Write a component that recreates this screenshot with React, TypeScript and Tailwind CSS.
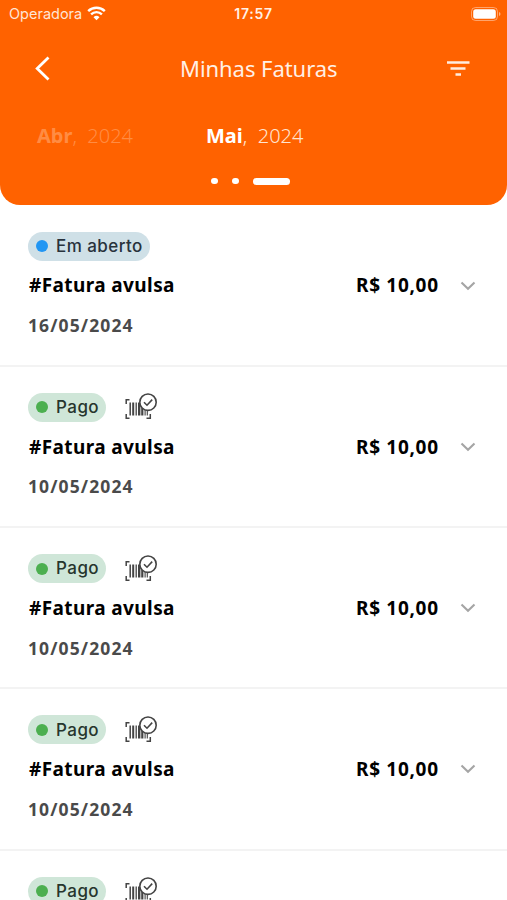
type Invoice = { status: 'open' | 'paid'; date?: string };

const invoices: Invoice[] = [
  { status: 'open', date: '16/05/2024' },
  { status: 'paid', date: '10/05/2024' },
  { status: 'paid', date: '10/05/2024' },
  { status: 'paid', date: '10/05/2024' },
  { status: 'paid' },
];

function WifiIcon() {
  return (
    <svg className="h-[15px] w-[19px]" viewBox="0 0 19 15" fill="none" stroke="#fff" strokeWidth="2.4">
      <path d="M1.2 5.2a11.8 11.8 0 0 1 16.6 0" />
      <path d="M4.1 8.3a7.7 7.7 0 0 1 10.8 0" />
      <path d="M9.5 14.2 6.5 11.2a4.3 4.3 0 0 1 6 0Z" fill="#fff" stroke="none" />
    </svg>
  );
}

function BatteryIcon() {
  return (
    <svg className="h-[14px] w-[30px]" viewBox="0 0 30 14" fill="none">
      <rect x="0.5" y="0.5" width="26" height="13" rx="4" stroke="#fff" strokeOpacity="0.42" />
      <rect x="2.2" y="2.2" width="22.6" height="9.6" rx="2.5" fill="#fff" />
      <path d="M28 5c2 .8 2 3.2 0 4Z" fill="#fff" fillOpacity="0.5" />
    </svg>
  );
}

function BarcodeCheckIcon() {
  return (
    <svg className="h-[28px] w-[34px]" viewBox="0 0 34 28" fill="none" stroke="#444">
      <path d="M5.5 6.7H2.2V11M2.2 21v4.2h3.3M22.5 25.2h3.8V21" strokeWidth="1.5" />
      <path d="M6.2 9.5v13" strokeWidth="1.5" />
      <path d="M9.2 9.5v13" strokeWidth="2" />
      <path d="M12.2 9.5v13" strokeWidth="1.3" />
      <path d="M15.2 9.5v13" strokeWidth="2.4" />
      <path d="M18.3 14v8.5" strokeWidth="2.2" />
      <path d="M21.1 17v5.5M23.3 17v5.5" strokeWidth="1.1" />
      <circle cx="24" cy="9.2" r="8.2" fill="#fff" strokeWidth="1.6" />
      <path d="m20 9.2 3 3 5.2-5.6" strokeWidth="1.6" />
    </svg>
  );
}

function InvoiceRow({ status, date }: Invoice) {
  const paid = status === 'paid';
  return (
    <li className="flex h-[161.25px] shrink-0 flex-col border-b-2 border-[#f3f3f3] pt-[26px] pl-7">
      <div className="flex h-[29px] items-center">
        <span
          className={`flex h-[29px] items-center rounded-full pl-2 font-['Inter',sans-serif] text-[17px] font-medium ${
            paid ? 'w-[78px] bg-[#cfe6d8] text-[#26352d]' : 'w-[122px] bg-[#cfe0e7] text-[#28323c]'
          }`}
        >
          <i className={`mr-2 size-3 shrink-0 rounded-full ${paid ? 'bg-[#4caf50]' : 'bg-[#2196f3]'}`} />
          <span className="pt-px whitespace-nowrap tracking-[0.45px]">{paid ? 'Pago' : 'Em aberto'}</span>
        </span>
        {paid && (
          <span className="ml-[18px]">
            <BarcodeCheckIcon />
          </span>
        )}
      </div>
      {date && (
        <>
          <div className="mt-[10px] flex h-[30px] items-center pl-px text-[19px] font-bold text-black">
            <span className="w-[327px] tracking-[0.4px]">#Fatura avulsa</span>
            <span className="w-[104px] tracking-[0.7px] whitespace-nowrap">R$ 10,00</span>
            <svg className="h-[10px] w-[16px]" viewBox="0 0 16 10" fill="none" stroke="#a5a5a5" strokeWidth="2.1">
              <path d="m1.5 1.5 6.5 6.3 6.5-6.3" />
            </svg>
          </div>
          <div className="mt-[10px] flex h-[29px] items-center text-[17.5px] font-bold tracking-[1.1px] text-[#4a4a4a]">
            {date}
          </div>
        </>
      )}
    </li>
  );
}

export default function App() {
  return (
    <main className="h-[900px] w-[507px] overflow-hidden bg-white font-['Noto_Sans',sans-serif]">
      <header className="flex h-[205px] flex-col rounded-b-[20px] bg-[#ff6200] text-white">
        <div className="grid h-[27px] grid-cols-3 items-center font-['Inter',sans-serif] text-[14.5px]">
          <div className="flex items-center gap-[5px] pl-[9px] text-[#ffe5d5]">
            <span>Operadora</span>
            <WifiIcon />
          </div>
          <span className="text-center text-[14px] font-semibold tracking-[0.7px] text-[#fff0e5]">17:57</span>
          <div className="flex justify-end pr-[6px]">
            <BatteryIcon />
          </div>
        </div>
        <div className="flex h-[83px] items-center">
          <svg className="ml-[34px] h-[26px] w-[17px]" viewBox="0 0 17 26" fill="none" stroke="#fff" strokeWidth="2.8">
            <path d="M14.5 1.5 3.2 12.5l11.3 11" />
          </svg>
          <h1 className="ml-[129px] w-[266px] text-[22px] font-normal tracking-[-0.05px] whitespace-nowrap text-[#fff0e5]">Minhas Faturas</h1>
          <svg className="h-[18px] w-[24px]" viewBox="0 0 24 18" fill="none" stroke="#ffece0" strokeWidth="2.4">
            <path d="M1 2.5h22.5M4.5 8.5h15M9.5 14.5h5.5" />
          </svg>
        </div>
        <div className="flex h-[52px] items-center pl-[37px] text-[20px] whitespace-nowrap">
          <div className="w-[169px] text-[#ff8c43]">
            <b>Abr</b>
            <span className="font-light">,&nbsp; 2024</span>
          </div>
          <div>
            <b>Mai</b>
            <span className="font-light text-[#ffe5d2]">,&nbsp; 2024</span>
          </div>
        </div>
        <div className="mt-[15.5px] flex h-[7px] items-center pl-[211px]">
          <i className="size-[6.5px] rounded-full bg-white" />
          <i className="ml-[14.5px] size-[6.5px] rounded-full bg-white" />
          <i className="ml-[14.5px] h-[7px] w-[37px] rounded-full bg-white" />
        </div>
      </header>
      <ul className="flex flex-col pt-[0.7px]">
        {invoices.map((invoice, index) => (
          <InvoiceRow key={index} {...invoice} />
        ))}
      </ul>
    </main>
  );
}
